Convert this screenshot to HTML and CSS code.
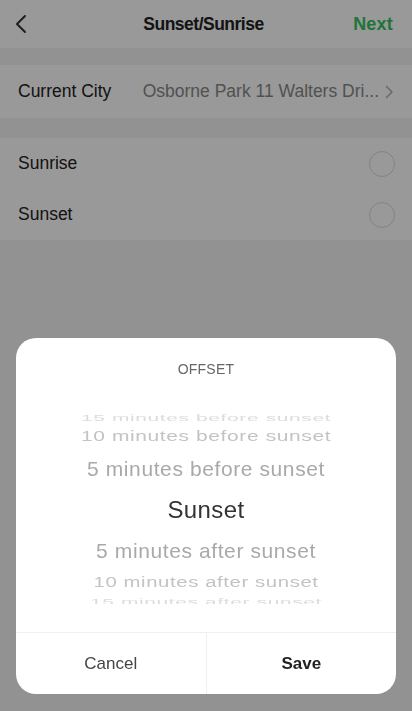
FILE: index.html
```html
<!DOCTYPE html>
<html lang="en">
<head>
<meta charset="utf-8">
<meta name="viewport" content="width=device-width, initial-scale=1">
<title>Sunset/Sunrise</title>
<link rel="stylesheet" href="styles.css">
</head>
<body>
<div class="page">
  <header class="nav">
    <button class="nav-back" aria-label="Back">
      <svg width="14" height="20" viewBox="0 0 14 20"><path d="M11 2 L3 10 L11 18" fill="none" stroke="#333" stroke-width="2" stroke-linecap="round" stroke-linejoin="round"/></svg>
    </button>
    <h1 class="nav-title">Sunset/Sunrise</h1>
    <button class="nav-next">Next</button>
  </header>

  <section class="group group-city">
    <div class="row">
      <span class="row-label">Current City</span>
      <span class="row-value">Osborne Park 11 Walters Dri...</span>
      <svg class="row-chevron" width="9" height="14" viewBox="0 0 9 14"><path d="M1.5 1.5 L7 7 L1.5 12.5" fill="none" stroke="#aaa" stroke-width="1.4" stroke-linecap="round" stroke-linejoin="round"/></svg>
    </div>
  </section>

  <section class="group group-options">
    <div class="row row-option">
      <span class="row-label">Sunrise</span>
      <span class="radio"></span>
    </div>
    <div class="row row-option">
      <span class="row-label">Sunset</span>
      <span class="radio"></span>
    </div>
  </section>
</div>

<div class="overlay"></div>

<div class="dialog">
  <div class="dialog-title">OFFSET</div>
  <div class="wheel">
    <div class="wheel-item far"><span>15 minutes before sunset</span></div>
    <div class="wheel-item mid"><span>10 minutes before sunset</span></div>
    <div class="wheel-item near"><span>5 minutes before sunset</span></div>
    <div class="wheel-item current"><span>Sunset</span></div>
    <div class="wheel-item near near-b"><span>5 minutes after sunset</span></div>
    <div class="wheel-item mid mid-b"><span>10 minutes after sunset</span></div>
    <div class="wheel-item far far-b"><span>15 minutes after sunset</span></div>
  </div>
  <div class="dialog-actions">
    <button class="action action-cancel">Cancel</button>
    <button class="action action-save">Save</button>
  </div>
</div>
</body>
</html>
```
FILE: styles.css
```css
* { box-sizing: border-box; }

html, body {
  margin: 0;
  padding: 0;
}

body {
  width: 412px;
  height: 711px;
  overflow: hidden;
  background: #f3f3f3;
  font-family: "Liberation Sans", Arial, sans-serif;
  color: #222;
}

button {
  font-family: inherit;
  background: none;
  border: 0;
  padding: 0;
  margin: 0;
  cursor: pointer;
}

.page {
  display: flex;
  flex-direction: column;
}

.nav {
  height: 48px;
  background: #fff;
  display: flex;
  align-items: center;
  justify-content: space-between;
  padding: 0 19px 0 14px;
}

.nav-back {
  width: 40px;
  height: 30px;
  display: flex;
  align-items: center;
  justify-content: flex-start;
}

.nav-title {
  margin: 0;
  font-size: 17.5px;
  font-weight: bold;
  letter-spacing: -0.5px;
  color: #222;
}

.nav-next {
  width: 40px;
  text-align: right;
  font-size: 18px;
  font-weight: bold;
  letter-spacing: 0.2px;
  color: #38c261;
}

.group {
  background: #fff;
}

.group-city {
  margin-top: 17px;
}

.group-options {
  margin-top: 20px;
}

.row {
  display: flex;
  align-items: center;
  padding: 0 18px;
  height: 53px;
}

.row-option {
  height: 51px;
}

.row-label {
  font-size: 17.5px;
  color: #222;
  white-space: nowrap;
}

.row-value {
  flex: 1;
  min-width: 0;
  text-align: right;
  font-size: 17.5px;
  color: #888;
  white-space: nowrap;
  overflow: hidden;
  margin-left: 20px;
}

.row-chevron {
  margin-left: 6px;
  flex: none;
}

.radio {
  margin-left: auto;
  width: 26px;
  height: 26px;
  border-radius: 50%;
  border: 1.5px solid #dadada;
  margin-right: -1px;
}

.overlay {
  position: fixed;
  inset: 0;
  background: rgba(0, 0, 0, 0.4);
}

.dialog {
  position: fixed;
  left: 16px;
  right: 16px;
  bottom: 17px;
  height: 356px;
  background: #fff;
  border-radius: 20px;
  display: flex;
  flex-direction: column;
  overflow: hidden;
}

.dialog-title {
  padding-top: 22px;
  height: 71px;
  line-height: 18px;
  text-align: center;
  font-size: 14px;
  color: #666;
  letter-spacing: 0.2px;
}

.wheel {
  height: 195px;
  overflow: hidden;
  display: flex;
  flex-direction: column;
}

.wheel-item {
  flex: none;
  display: flex;
  align-items: center;
  justify-content: center;
  white-space: nowrap;
  font-size: 21px;
  letter-spacing: 0.6px;
  color: #aaa;
}

.wheel-item span {
  display: block;
  line-height: 24px;
}

.wheel-item.far {
  height: 14px;
  color: #dcdcdc;
  align-items: flex-end;
}

.wheel-item.far span {
  transform: scaleY(0.42);
  margin-bottom: -7px;
}

.wheel-item.far-b {
  height: 10px;
  align-items: flex-start;
}

.wheel-item.far-b span {
  margin-bottom: 0;
  margin-top: -4px;
}

.wheel-item.mid {
  height: 26px;
  color: #c3c3c3;
}

.wheel-item.mid span {
  transform: scaleY(0.74);
}

.wheel-item.mid-b {
  height: 24px;
}

.wheel-item.mid-b span {
  transform: scale(0.97, 0.74);
}

.wheel-item.near {
  height: 39px;
  color: #a9a9a9;
}

.wheel-item.near-b {
  height: 38px;
}

.wheel-item.current {
  height: 44px;
  font-size: 24px;
  letter-spacing: 0.4px;
  color: #333;
}

.dialog-actions {
  margin-top: auto;
  height: 62px;
  border-top: 1px solid #efefef;
  display: flex;
}

.action {
  flex: 1;
  font-size: 17px;
  color: #444;
}

.action-cancel {
  border-right: 1px solid #efefef;
}

.action-save {
  font-weight: bold;
  color: #222;
}
```
